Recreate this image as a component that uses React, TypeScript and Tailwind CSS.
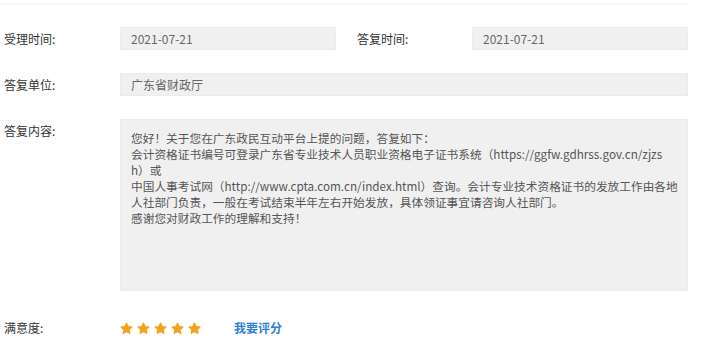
import React from "react"

const font = {
  fontFamily: '"Noto Sans CJK SC", "Noto Sans", sans-serif',
}

const replyLines = [
  "您好！关于您在广东政民互动平台上提的问题，答复如下：",
  "会计资格证书编号可登录广东省专业技术人员职业资格电子证书系统（https://ggfw.gdhrss.gov.cn/zjzs",
  "h）或",
  "中国人事考试网（http://www.cpta.com.cn/index.html）查询。会计专业技术资格证书的发放工作由各地",
  "人社部门负责，一般在考试结束半年左右开始发放，具体领证事宜请咨询人社部门。",
  "感谢您对财政工作的理解和支持！",
]

function Star() {
  return (
    <svg width="13" height="13" viewBox="0 0 24 24" className="block">
      <path
        d="M12 1.8l3.1 6.6 7.1.9-5.2 4.9 1.3 7.1L12 17.8l-6.3 3.5 1.3-7.1-5.2-4.9 7.1-.9z"
        fill="#f7a21e"
        stroke="#f7a21e"
        strokeWidth="2"
        strokeLinejoin="round"
      />
    </svg>
  )
}

export default function App() {

  return (

    <div className="w-[716px] h-[346px] bg-white text-[12px] text-[#333]" style={font}>

      <div className="w-[688px] pt-[3px]">

        {/* TOP LINE */}

        <div className="h-[2px] bg-[#f6f6f6]" />

        {/* TIMES */}

        <div className="grid grid-cols-[120px_216px_136px_216px] items-center mt-[22px]">

          <div className="pl-[4px]">受理时间:</div>

          <div className="h-[23px] bg-[#f0f0f0] border border-[#ebebeb] pl-[10px] flex items-center text-[#666]">
            2021-07-21
          </div>

          <div className="pl-[21px]">答复时间:</div>

          <div className="h-[23px] bg-[#f0f0f0] border border-[#ebebeb] pl-[10px] flex items-center text-[#666]">
            2021-07-21
          </div>

        </div>

        {/* UNIT */}

        <div className="flex items-center mt-[23px]">

          <div className="w-[120px] shrink-0 pl-[4px]">答复单位:</div>

          <div className="flex-1 h-[23px] bg-[#f0f0f0] border border-[#ebebeb] pl-[10px] flex items-center text-[#666]">
            广东省财政厅
          </div>

        </div>

        {/* CONTENT */}

        <div className="flex mt-[23px]">

          <div className="w-[120px] shrink-0 pl-[4px] pt-[4px] leading-[16px]">答复内容:</div>

          <div className="flex-1 min-w-0 h-[172px] bg-[#f0f0f0] border border-[#ebebeb] pl-[10px] pt-[10px] text-[#555] text-[11.7px] leading-[16px]">
            {replyLines.map(line => (
              <div key={line} className="whitespace-nowrap">
                {line}
              </div>
            ))}
          </div>

        </div>

        {/* RATING */}

        <div className="flex items-center mt-[28px]">

          <div className="w-[120px] shrink-0 pl-[4px]">满意度:</div>

          <div className="flex gap-[4px]">
            <Star />
            <Star />
            <Star />
            <Star />
            <Star />
          </div>

          <div className="ml-[33px] font-bold text-[#2f7fd6]">我要评分</div>

        </div>

      </div>

    </div>

  )
}
